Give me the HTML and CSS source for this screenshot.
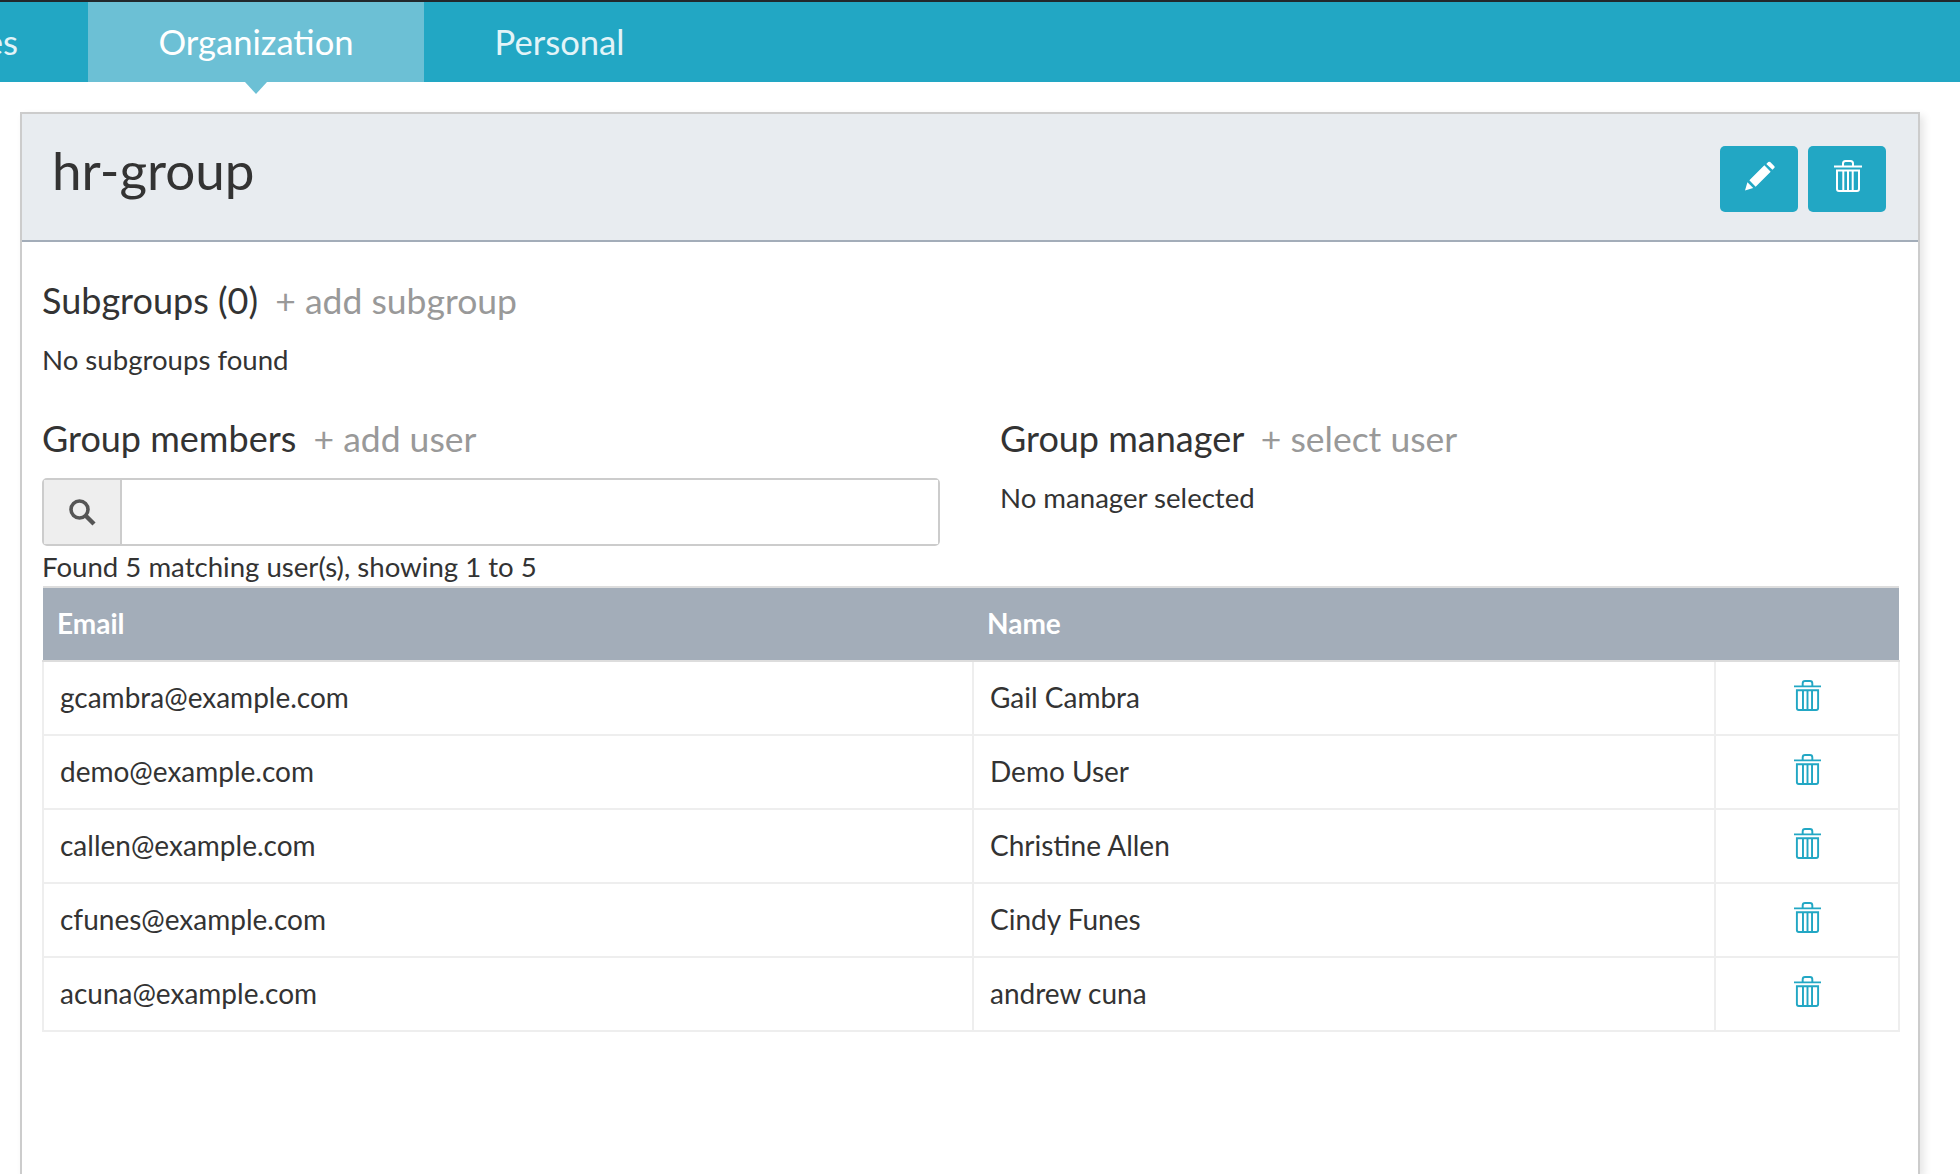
FILE: index.html
```html
<!DOCTYPE html>
<html>
    <head>
        <meta http-equiv=Content-Type content=text/html;charset=UTF-8>
        <title>hr-group</title>
        <link rel="stylesheet" href="styles.css">
    </head>
    <body>
        <svg class="sprite" width="0" height="0">
            <symbol id="trash" viewBox="0 0 28 32">
                <path d="M0 6.5h28M9 6V3.5Q9 1 11.500 1h5Q19 1 19 3.500V6" fill="none" stroke="currentColor" stroke-width="2"/>
                <path d="M3 10.500h22v18.500q0 2-2 2H5q-2 0-2-2zM9.300 10.500V31M14 10.500V31M18.700 10.500V31" fill="none" stroke="currentColor" stroke-width="2"/>
            </symbol>
        </svg>
        <nav class="tabs">
            <a class="tab tab-cut">Roles</a>
            <a class="tab active">Organization</a>
            <a class="tab">Personal</a>
        </nav>
        <section class="panel">
            <header class="panel-head">
                <h1>hr-group</h1>
                <div class="actions">
                    <button class="btn">
                        <svg class="btn-icon" viewBox="0 0 31 30"><path d="M0 30 2.500 21.500 8.500 27.500ZM4.500 19.500 20 4 26.500 10.500 11 26ZM22 2.500 24 .6Q25 0 26 .6L30.400 4.800Q31 5.800 30.400 6.600L28.400 8.600Z" fill="currentColor"/></svg>
                    </button>
                    <button class="btn">
                        <svg class="btn-icon"><use href="#trash"/></svg>
                    </button>
                </div>
            </header>
            <div class="panel-body">
                <h2>Subgroups (0) <a class="add">+ add subgroup</a></h2>
                <p class="note">No subgroups found</p>

                <div class="columns">
                    <div>
                        <h2>Group members <a class="add">+ add user</a></h2>
                        <div class="search">
                            <span class="search-addon">
                                <svg width="28" height="28" viewBox="0 0 28 28"><circle cx="11.500" cy="11.500" r="8.500" fill="none" stroke="#555" stroke-width="3.600"/><path d="M17.500 17.500 26 26" stroke="#555" stroke-width="4.400"/></svg>
                            </span>
                            <input class="search-input" type="text">
                        </div>
                    </div>
                    <div>
                        <h2>Group manager <a class="add">+ select user</a></h2>
                        <p class="note">No manager selected</p>
                    </div>
                </div>

                <p class="found">Found 5 matching user(s), showing 1 to 5</p>
                <table class="users">
                    <thead>
                        <tr><th class="col-email">Email</th><th class="col-name">Name</th><th class="col-del"></th></tr>
                    </thead>
                    <tbody>
                        <tr><td>gcambra@example.com</td><td>Gail Cambra</td><td class="del"><svg class="row-icon"><use href="#trash"/></svg></td></tr>
                        <tr><td>demo@example.com</td><td>Demo User</td><td class="del"><svg class="row-icon"><use href="#trash"/></svg></td></tr>
                        <tr><td>callen@example.com</td><td>Christine Allen</td><td class="del"><svg class="row-icon"><use href="#trash"/></svg></td></tr>
                        <tr><td>cfunes@example.com</td><td>Cindy Funes</td><td class="del"><svg class="row-icon"><use href="#trash"/></svg></td></tr>
                        <tr><td>acuna@example.com</td><td>andrew cuna</td><td class="del"><svg class="row-icon"><use href="#trash"/></svg></td></tr>
                    </tbody>
                </table>
            </div>
        </section>
    </body>
</html>
```

FILE: styles.css
```css
html, body {
    height: 100%;
    overflow: hidden;
}
body {
    margin: 0;
    font: 28px/1.4 Lato, "Open Sans", sans-serif;
    color: #333;
    background: #fff;
}
.sprite {
    position: absolute;
}
.tabs {
    display: flex;
    height: 80px;
    background: #22a7c4;
    border-top: 2px solid #22282c;
}
.tab {
    position: relative;
    display: flex;
    align-items: center;
    padding: 0 70.5px;
    font-size: 34.6px;
    color: #e2f4f8;
    white-space: nowrap;
}
.tab-cut {
    width: 18px;
    padding: 0 70px 0 0;
    justify-content: flex-end;
    overflow: hidden;
}
.tab.active {
    background: #6cc0d5;
    color: #fff;
}
.tab.active:after {
    content: "";
    position: absolute;
    top: 100%;
    left: 50%;
    margin-left: -11px;
    border: 11px solid transparent;
    border-top: 12px solid #6cc0d5;
    border-bottom: 0;
}
.panel {
    display: flex;
    flex-direction: column;
    width: 1900px;
    height: 1062px;
    margin: 30px 0 0 20px;
    box-sizing: border-box;
    border: 2px solid #ccc;
    border-bottom: 0;
    box-shadow: 4px 4px 8px rgba(0, 0, 0, 0.1);
}
.panel-head {
    display: flex;
    justify-content: space-between;
    height: 126px;
    padding: 0 32px 0 30px;
    background: #e8ecf0;
    border-bottom: 2px solid #a3adb9;
}
h1 {
    margin: 23px 0 0;
    font-size: 53px;
    font-weight: 400;
    line-height: 66px;
}
.actions {
    display: flex;
    gap: 10px;
    margin-top: 32px;
}
.btn {
    display: flex;
    align-items: center;
    justify-content: center;
    width: 78px;
    height: 66px;
    padding: 0 0 7px 1px;
    border: 0;
    border-radius: 5px;
    background: #22a7c4;
    color: #fff;
}
.btn-icon {
    width: 30px;
    height: 32px;
}
.panel-body {
    padding: 36px 20px 0;
}
h2 {
    margin: 0;
    font-size: 36px;
    font-weight: 400;
    line-height: 44px;
}
.add {
    margin-left: 8px;
    font-size: 35.5px;
    color: #999;
}
.note {
    margin: 20px 0 0;
    font-size: 27.6px;
    line-height: 34px;
}
.columns {
    display: grid;
    grid-template-columns: 898px 1fr;
    gap: 60px;
    margin-top: 39px;
}
.columns .note {
    margin-top: 20px;
}
.search {
    display: flex;
    height: 68px;
    margin-top: 17px;
    box-sizing: border-box;
    border: 2px solid #ccc;
    border-radius: 5px;
}
.search-addon {
    display: flex;
    align-items: center;
    justify-content: center;
    width: 76px;
    background: #eee;
    border-right: 2px solid #ccc;
}
.search-input {
    flex: 1;
    border: 0;
    background: #fff;
}
.found {
    margin: 2px 0 0;
    font-size: 27.6px;
    line-height: 38px;
}
.users {
    width: 1858px;
    border-collapse: collapse;
    table-layout: fixed;
}
.col-email {
    width: 930px;
}
.col-name {
    width: 742px;
}
.users th {
    height: 74px;
    padding: 0 14px;
    box-sizing: border-box;
    text-align: left;
    font-weight: 700;
    color: #fff;
    background: #a3adb9;
    border-top: 2px solid #ddd;
    border-bottom: 2px solid #ddd;
}
.users td {
    height: 74px;
    padding: 0 16px;
    box-sizing: border-box;
    border: 2px solid #eee;
    color: #333;
}
.users .del {
    text-align: center;
    padding-bottom: 12px;
    color: #22a7c4;
}
.row-icon {
    width: 27px;
    height: 31px;
    vertical-align: middle;
}
```
